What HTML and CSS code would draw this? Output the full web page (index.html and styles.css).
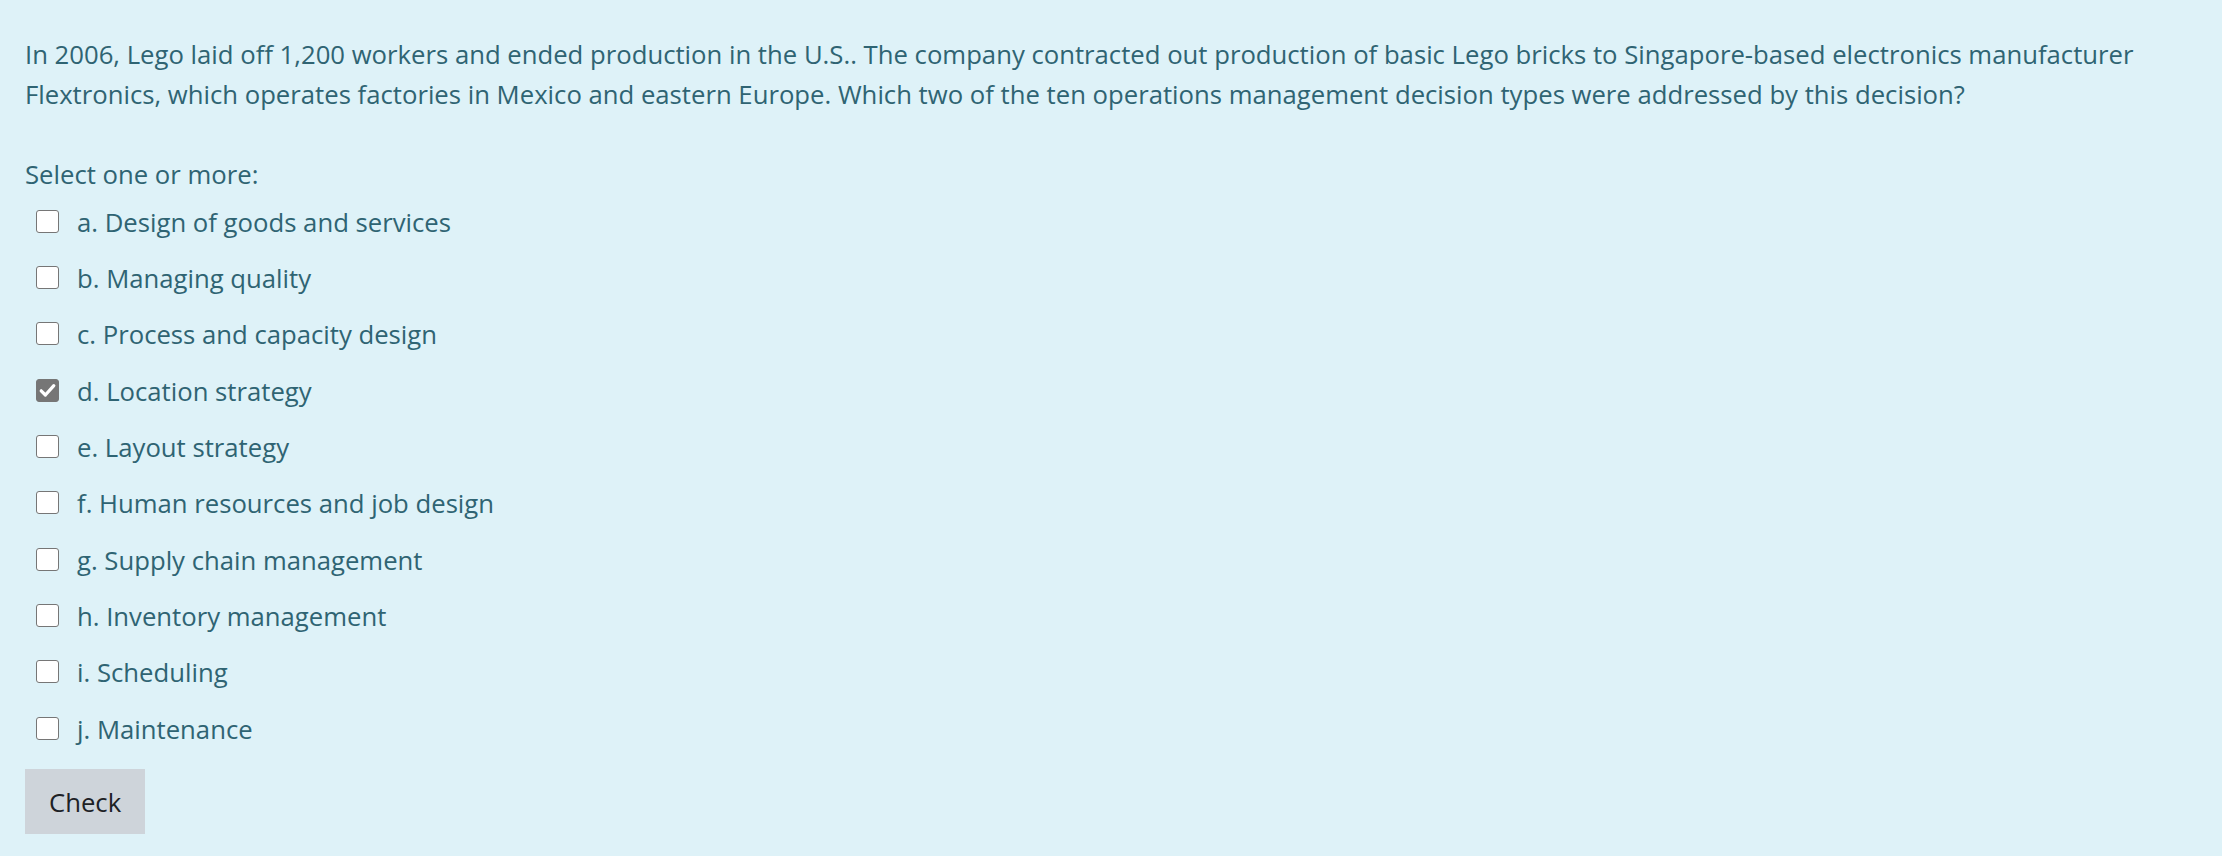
FILE: index.html
```html
<!DOCTYPE html>
<html lang="en">
<head>
<meta charset="utf-8">
<title>Question</title>
<link rel="stylesheet" href="styles.css">
</head>
<body>
<div class="formulation">
  <p class="qtext">In 2006, Lego laid off 1,200 workers and ended production in the U.S.. The company contracted out production of basic Lego bricks to Singapore-based electronics manufacturer Flextronics, which operates factories in Mexico and eastern Europe. Which two of the ten operations management decision types were addressed by this decision?</p>
  <div class="prompt">Select one or more:</div>
  <div class="answers">
    <label class="opt"><span class="box"></span><span class="lbl">a. Design of goods and services</span></label>
    <label class="opt"><span class="box"></span><span class="lbl">b. Managing quality</span></label>
    <label class="opt"><span class="box"></span><span class="lbl">c. Process and capacity design</span></label>
    <label class="opt"><span class="box checked"><svg viewBox="0 0 23 23" width="23" height="23"><path d="M5.2 11.8 L9.4 16 L17.8 6.6" fill="none" stroke="#fff" stroke-width="3.2" stroke-linecap="round" stroke-linejoin="round"/></svg></span><span class="lbl">d. Location strategy</span></label>
    <label class="opt"><span class="box"></span><span class="lbl">e. Layout strategy</span></label>
    <label class="opt"><span class="box"></span><span class="lbl">f. Human resources and job design</span></label>
    <label class="opt"><span class="box"></span><span class="lbl">g. Supply chain management</span></label>
    <label class="opt"><span class="box"></span><span class="lbl">h. Inventory management</span></label>
    <label class="opt"><span class="box"></span><span class="lbl">i. Scheduling</span></label>
    <label class="opt"><span class="box"></span><span class="lbl">j. Maintenance</span></label>
  </div>
  <button class="check" type="button">Check</button>
</div>
</body>
</html>
```
FILE: styles.css
```css
html, body {
  margin: 0;
  padding: 0;
  background: #ffffff;
}
body {
  font-family: "Open Sans", "Noto Sans", sans-serif;
  font-size: 25.7px;
  line-height: 40px;
  color: #2f6473;
}
.formulation {
  background: #def2f8;
  height: 856px;
  box-sizing: border-box;
  padding: 34.5px 25px 0 25px;
  display: flex;
  flex-direction: column;
  align-items: flex-start;
}
.qtext {
  margin: 0 0 40px 0;
}
.prompt {
  height: 38.5px;
}
.answers {
  display: flex;
  flex-direction: column;
}
.opt {
  display: flex;
  align-items: center;
  height: 56.33px;
}
.lbl {
  padding-top: 3px;
}
.box {
  width: 23px;
  height: 23px;
  box-sizing: border-box;
  border: 1px solid #767676;
  border-radius: 3px;
  background: #ffffff;
  margin-left: 11px;
  margin-right: 18px;
  flex: none;
  display: flex;
}
.box.checked {
  background: #767676;
  border-color: #767676;
}
.box svg {
  display: block;
  margin: -1px;
}
.check {
  margin-top: 12.7px;
  height: 65px;
  padding: 3px 24px 0 24px;
  border: none;
  border-radius: 0;
  background: #ced4da;
  color: #1d2125;
  font-family: "Open Sans", "Noto Sans", sans-serif;
  font-size: 25.7px;
  line-height: 40px;
}
```
